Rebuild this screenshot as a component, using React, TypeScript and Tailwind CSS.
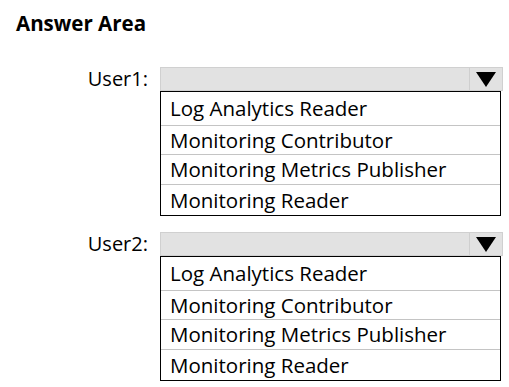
import React from "react";

const options = [
  "Log Analytics Reader",
  "Monitoring Contributor",
  "Monitoring Metrics Publisher",
  "Monitoring Reader",
];
const rowH = ["h-[33px]", "h-[29px]", "h-[30px]", "h-[31px]"];

function Dropdown({ label }: { label: string }) {
  return (
    <div className="flex">
      <div className="w-[148px] h-[24px] flex items-center justify-end text-[20px] text-black leading-none">
        {label}
      </div>
      <div className="ml-[12px] w-[343px] flex flex-col">
        <div className="h-[24px] flex bg-[#e2e2e2] border border-[#d0d0d0]">
          <div className="flex-1" />
          <div className="w-[33px] border-l border-[#cfcfcf] flex items-center justify-center">
            <svg width="20" height="15" viewBox="0 0 20 15">
              <polygon points="0,0 20,0 10,15" fill="#000" />
            </svg>
          </div>
        </div>
        <div className="w-[341px] border border-black">
          {options.map((o, i) => (
            <div
              key={o}
              className={`${rowH[i]} flex items-center pl-[9px] text-[20.5px] leading-none text-black ${
                i > 0 ? "border-t border-[#c4c4c4]" : ""
              }`}
            >
              {o}
            </div>
          ))}
        </div>
      </div>
    </div>
  );
}

export default function App() {
  return (
    <div
      className="w-[509px] h-[387px] bg-white overflow-hidden"
      style={{ fontFamily: '"Open Sans", "Noto Sans", sans-serif' }}
    >
      <div className="pl-[16px] pt-[10px] text-[20.5px] font-bold leading-[26px] text-black">
        Answer Area
      </div>
      <div className="mt-[31px] flex flex-col gap-[16px]">
        <Dropdown label="User1:" />
        <Dropdown label="User2:" />
      </div>
    </div>
  );
}
